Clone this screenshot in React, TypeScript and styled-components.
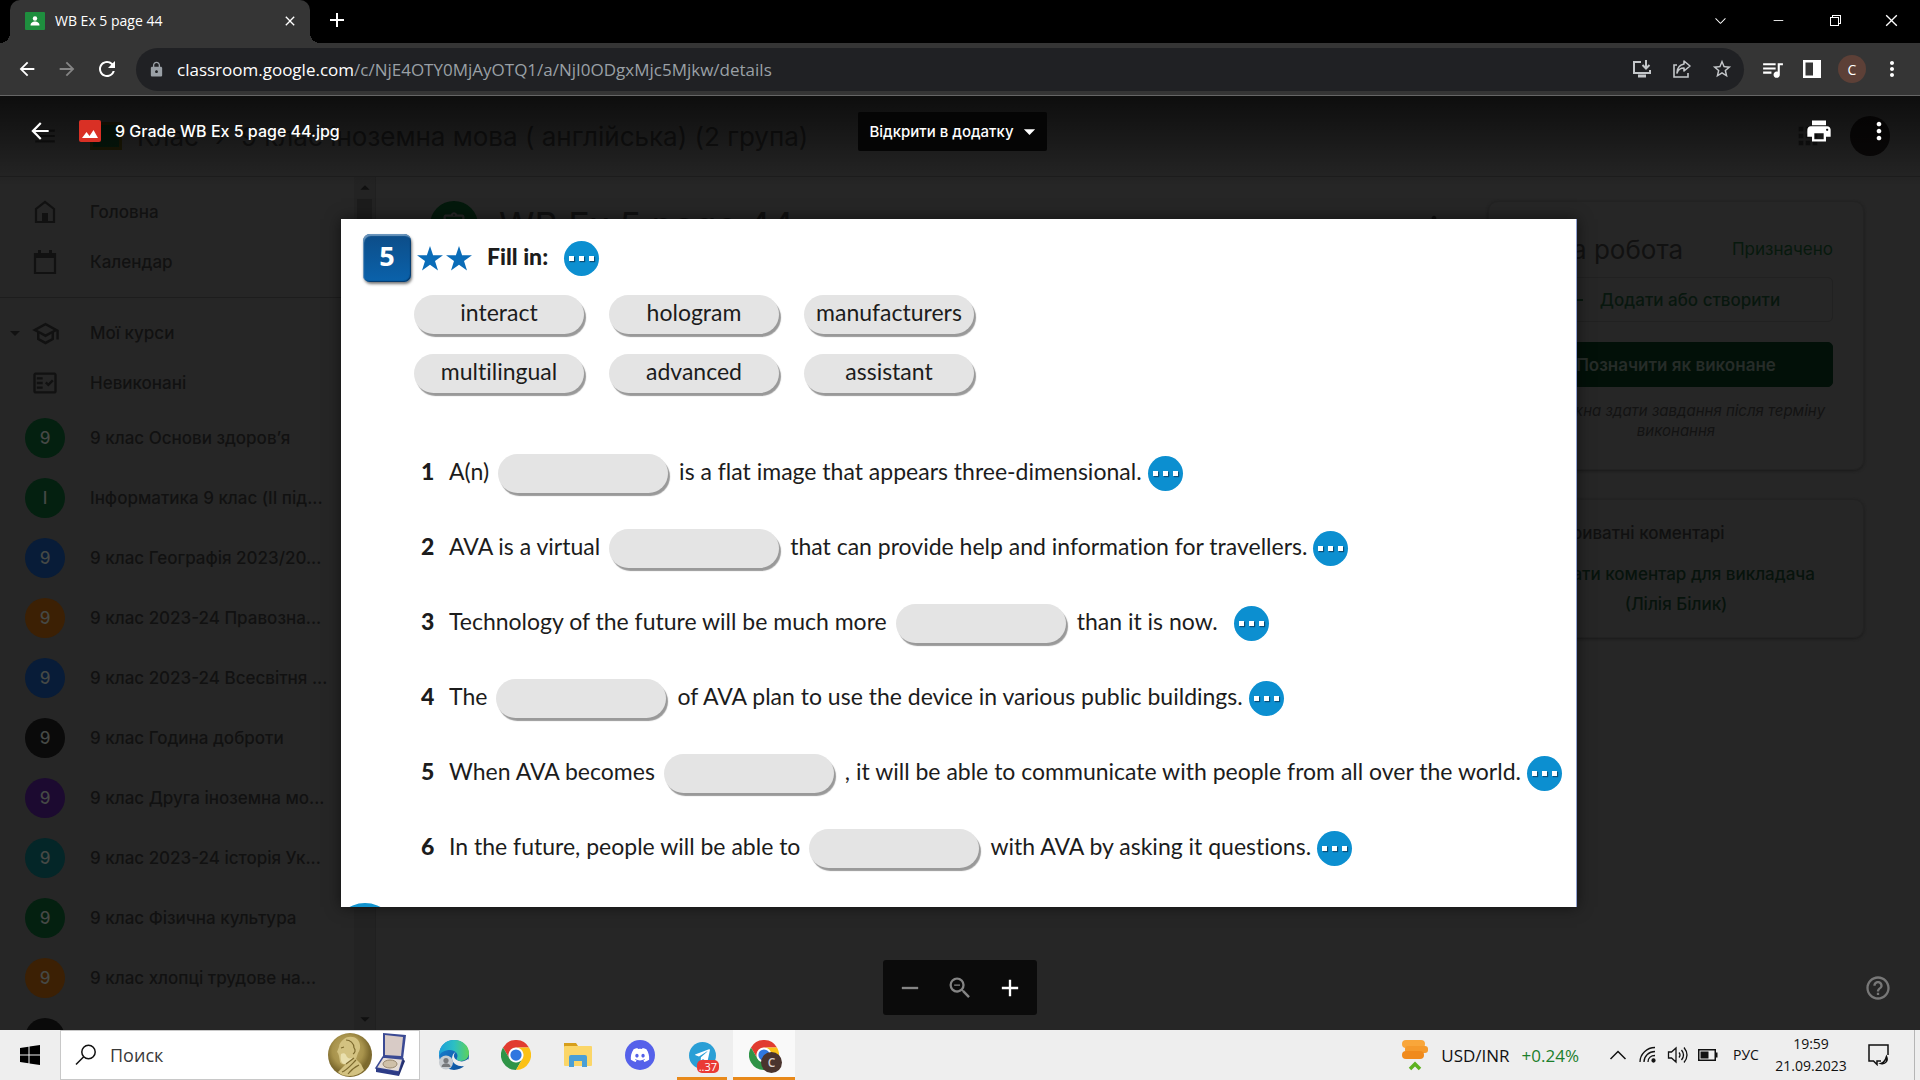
import React from 'react';
import styled, { createGlobalStyle, css } from 'styled-components';
import {
  MdArrowBack, MdArrowForward, MdRefresh, MdLock, MdStarBorder, MdQueueMusic, MdMoreVert, MdAdd, MdRemove,
  MdClose, MdPrint, MdArrowDropDown, MdArrowDropUp, MdZoomOut, MdHelpOutline, MdOutlineSchool, MdOutlineFactCheck,
  MdMenu, MdApps, MdOutlineAssignment, MdPersonOutline,
} from 'react-icons/md';
import { VscChevronDown, VscChromeMinimize, VscChromeRestore, VscChromeClose } from 'react-icons/vsc';
import { FaDiscord, FaTelegramPlane } from 'react-icons/fa';

const ui = '"Open Sans", "Noto Sans", sans-serif';
const google = 'Inter, Roboto, sans-serif';
const book = 'Lato, "Open Sans", sans-serif';

const GlobalStyle = createGlobalStyle`
  * { box-sizing: border-box; }
  body { margin: 0; background: #262626; overflow: hidden; }
  button, input { font: inherit; color: inherit; margin: 0; padding: 0; border: 0; background: none; }
  button { cursor: pointer; }
  ul, ol { list-style: none; margin: 0; padding: 0; }
  h1, h2, p { margin: 0; font-weight: 400; }
  a { color: inherit; text-decoration: none; }
  svg { display: block; flex: none; }
`;

const Desktop = styled.div`
  display: flex;
  flex-direction: column;
  height: 100vh;
  font-family: ${ui};
`;

/* ---------- browser frame ---------- */

const TabStrip = styled.header`
  display: flex;
  height: 43px;
  padding-left: 10px;
  background: #000;
  color: #fff;
`;

const Tab = styled.div`
  position: relative;
  display: flex;
  align-items: center;
  width: 300px;
  padding: 0 12px 2px 15px;
  gap: 10px;
  border-radius: 10px 10px 0 0;
  background: #353535;
  font-size: 14px;

  &::before, &::after {
    content: '';
    position: absolute;
    bottom: 0;
    width: 10px;
    height: 10px;
  }
  &::before { left: -10px; background: radial-gradient(circle at 0 0, #000 10px, #353535 10px); }
  &::after { right: -10px; background: radial-gradient(circle at 100% 0, #000 10px, #353535 10px); }
`;

const TabTitle = styled.span`
  flex: 1;
`;

const PlainButton = styled.button<{ $w?: number; $dim?: boolean }>`
  display: flex;
  align-items: center;
  justify-content: center;
  width: ${p => p.$w ?? 40}px;
  height: 40px;
  color: ${p => (p.$dim ? '#858585' : '#fff')};
`;

const TabClose = styled.button`
  display: flex;
`;

const NewTab = styled(PlainButton)`
  margin-left: 7px;
`;

const WindowButtons = styled.div`
  display: flex;
  margin-left: auto;
`;

const Toolbar = styled.nav`
  display: flex;
  align-items: center;
  height: 53px;
  padding: 0 8px 0 7px;
  border-bottom: 1px solid #666;
  background: #353535;
  color: #fff;
`;

const Omnibox = styled.div`
  display: flex;
  align-items: center;
  flex: 1;
  height: 43px;
  margin: 0 8px 0 9px;
  padding: 0 2px 0 12px;
  border-radius: 22px;
  background: #202124;
  font-size: 17px;
  color: #9aa0a6;
`;

const Address = styled.div`
  flex: 1;
  margin-left: 12px;
  outline: 0;
  white-space: nowrap;
  overflow: hidden;
`;

const Domain = styled.span`
  color: #fff;
`;

const Avatar = styled.span`
  display: grid;
  place-items: center;
  width: 28px;
  height: 28px;
  border-radius: 50%;
  background: #5d4037;
  font-size: 14px;
`;

/* ---------- dimmed classroom page ---------- */

const Viewport = styled.div`
  position: relative;
  display: flex;
  flex-direction: column;
  flex: 1;
  min-height: 0;
  background: #262626;
  color: #101010;
  font-family: ${google};
`;

const PageHeader = styled.div`
  display: flex;
  align-items: center;
  height: 81px;
  padding: 0 30px 0 32px;
  border-bottom: 1px solid #1e1e1e;
  font-size: 26px;
  color: #121212;
`;

const LogoMark = styled.span`
  width: 32px;
  height: 28px;
  margin: 0 15px 0 32px;
  border: 3px solid #1d1a05;
  background: #061a0d;
`;

const Crumb = styled.a`
  margin-right: 16px;
`;

const AppsMark = styled.span`
  margin-left: auto;
  margin-right: 28px;
`;

const Account = styled.span`
  width: 40px;
  height: 40px;
  border-radius: 50%;
  background: #0a0808;
`;

const PageBody = styled.div`
  display: flex;
  flex: 1;
  min-height: 0;
`;

const Sidebar = styled.aside`
  display: flex;
  width: 376px;
  border-right: 1px solid #202020;
`;

const SideList = styled.ul`
  flex: 1;
  padding-top: 10px;
  overflow: hidden;
  font-size: 17px;
  font-weight: 500;
  color: #111;
`;

const SideItem = styled.li<{ $tall?: boolean }>`
  display: flex;
  align-items: center;
  height: ${p => (p.$tall ? 60 : 50)}px;
  padding-left: 5px;
`;

const SideMark = styled.span`
  display: flex;
  justify-content: center;
  width: 20px;
`;

const SideIcon = styled.span`
  display: flex;
  justify-content: center;
  width: 40px;
  margin-right: 25px;
`;

const SideRule = styled.li`
  height: 21px;
  padding-top: 10px;
  &::after { content: ''; display: block; border-top: 1px solid #1d1d1d; }
`;

const Course = styled.span<{ $tone: string }>`
  display: grid;
  place-items: center;
  width: 40px;
  height: 40px;
  background: ${p => p.$tone};
  border-radius: 50%;
  color: #454845;
`;

const Scrollbar = styled.div`
  display: flex;
  flex-direction: column;
  align-items: center;
  justify-content: space-between;
  width: 21px;
  background: #232323;
`;

const Thumb = styled.span`
  width: 15px;
  height: 220px;
  margin-bottom: auto;
  background: #1c1c1c;
`;

const PageMain = styled.main`
  display: flex;
  flex: 1;
  align-items: flex-start;
  padding: 24px 56px 0 54px;
`;

const TaskHead = styled.div`
  display: flex;
  align-items: center;
  flex: 1;
  gap: 21px;
  padding-right: 40px;
`;

const TaskBadge = styled.span`
  display: grid;
  place-items: center;
  width: 48px;
  height: 48px;
  border-radius: 50%;
  background: #04190c;
  color: #262626;
`;

const TaskTitle = styled.h1`
  flex: 1;
  font-size: 36px;
  line-height: 48px;
`;

const Cards = styled.div`
  display: grid;
  gap: 29px;
  width: 376px;
`;

const Card = styled.section<{ $tail: number }>`
  padding: 15px 30px ${p => p.$tail}px;
  border: 1px solid #222;
  border-radius: 10px;
  box-shadow: 0 1px 3px #1a1a1a;
`;

const CardHead = styled.div`
  display: flex;
  align-items: center;
  justify-content: space-between;
  height: 60px;
  padding-top: 4px;
`;

const CardTitle = styled.h2`
  font-size: 26px;
  color: #111;
`;

const Status = styled.span`
  font-size: 17px;
  color: #07190d;
`;

const CardButton = styled.button<{ $filled?: boolean }>`
  display: flex;
  align-items: center;
  justify-content: center;
  gap: 12px;
  width: 100%;
  height: 45px;
  margin-bottom: 20px;
  padding-right: 8px;
  border: 1px solid #212121;
  border-radius: 5px;
  font-size: 17px;
  font-weight: 500;
  color: #08170e;
  white-space: nowrap;
  ${p => p.$filled && css`
    margin-bottom: 14px;
    padding-right: 0;
    border-color: #021008;
    background: #021008;
    font-weight: 600;
    color: #262c28;
  `}
`;

const Note = styled.p`
  font-size: 15px;
  line-height: 20px;
  font-style: italic;
  text-align: center;
  color: #131313;
`;

const CommentHead = styled.h2`
  display: flex;
  align-items: center;
  gap: 14px;
  height: 36px;
  font-size: 17px;
  font-weight: 500;
`;

const CommentLink = styled.a`
  display: block;
  margin-top: 8px;
  font-size: 17px;
  font-weight: 500;
  line-height: 30px;
  text-align: center;
  color: #07130c;
`;

/* ---------- file viewer ---------- */

const Viewer = styled.div`
  position: absolute;
  inset: 0;
  display: flex;
  flex-direction: column;
  background: linear-gradient(rgba(0, 0, 0, 0.65), rgba(0, 0, 0, 0) 90px);
  color: #fff;
`;

const ViewerHead = styled.div`
  display: grid;
  grid-template-columns: 1fr auto 1fr;
  align-items: center;
  height: 70px;
  padding: 0 27px 0 12px;
`;

const FileInfo = styled.div`
  display: flex;
  align-items: center;
  padding-left: 15px;
  font-size: 16px;
  font-weight: 500;
`;

const IconButton = styled.button`
  display: flex;
`;

const FileMark = styled.span`
  display: flex;
  margin: 0 14px 0 26px;
`;

const OpenButton = styled.button`
  display: flex;
  align-items: center;
  height: 39px;
  padding: 0 4px 0 11px;
  gap: 2px;
  border-radius: 2px;
  background: #050505;
  font-size: 15px;
  font-weight: 500;
`;

const ViewerActions = styled.div`
  display: flex;
  justify-content: flex-end;
  gap: 32px;
`;

const Stage = styled.div`
  display: flex;
  flex: 1;
  align-items: center;
  justify-content: center;
  min-height: 0;
  padding-right: 2px;
`;

const ViewerFoot = styled.div`
  display: grid;
  grid-template-columns: 1fr auto 1fr;
  align-items: center;
  padding: 0 28px 15px;
`;

const ZoomBar = styled.div`
  display: flex;
  grid-column: 2;
  align-items: center;
  height: 55px;
  padding: 0 2px;
  border-radius: 3px;
  background: #0b0b0b;
`;

const HelpButton = styled(IconButton)`
  justify-self: end;
  color: #777;
`;

/* ---------- worksheet ---------- */

const Sheet = styled.article`
  width: 1236px;
  max-width: 100%;
  padding-top: 15px;
  border-right: 1px solid #8f9fd0;
  background: #fff;
  box-shadow: 0 0 14px rgba(0, 0, 0, 0.55);
  color: #1c1c1c;
  font-family: ${book};
  font-size: 23px;
  font-variant-ligatures: none;
  overflow: hidden;
`;

const Task = styled.div`
  display: flex;
  align-items: center;
  padding-left: 22px;
  height: 48px;
`;

const TaskNumber = styled.span`
  width: 48px;
  height: 48px;
  margin-right: 6px;
  border-radius: 7px;
  background: linear-gradient(#0d4d88, #0a62ab);
  box-shadow: inset 1px 2px 1px #6b96bd, inset -1px -1px 1px #063a6b, 1px 2px 3px #777;
  color: #fff;
  font-family: "Open Sans", sans-serif;
  font-size: 27px;
  font-weight: 700;
  line-height: 44px;
  text-align: center;
`;

const TaskText = styled.h1`
  margin: 0 10px 0 15px;
  font-size: 23px;
  font-weight: 900;
  line-height: 44px;
  height: 48px;
`;

const Stars = styled.span`
  display: flex;
  gap: 3px;
`;

const Dots = styled.button<{ $far?: boolean }>`
  display: flex;
  align-items: center;
  justify-content: center;
  align-self: center;
  gap: 5px;
  width: 35px;
  height: 35px;
  flex: none;
  margin-left: ${p => (p.$far ? 16 : 6)}px;
  border-radius: 50%;
  background: #0c8fd0;

  i {
    width: 5px;
    height: 5px;
    background: #fff;
    box-shadow: 1px 1px 1px #0b4f78;
  }
`;

const pill = css`
  width: 170px;
  height: 39px;
  flex: none;
  border-radius: 20px;
  background: #e4e4e4;
  box-shadow: 2px 3px 1px #999;
  text-align: center;
`;

const WordBank = styled.div`
  display: grid;
  grid-template-columns: repeat(3, 170px);
  gap: 20px 25px;
  margin: 13px 0 61px 73px;
`;

const Word = styled.button`
  && {
    ${pill}
    padding-bottom: 5px;
    line-height: 34px;
    white-space: nowrap;
  }
`;

const Questions = styled.ol`
  display: grid;
  gap: 36px;
  padding-left: 80px;
`;

const Question = styled.li`
  display: flex;
  align-items: flex-start;
  line-height: 34px;
  white-space: nowrap;
`;

const Num = styled.b`
  width: 28px;
  font-weight: 900;
`;

const Blank = styled.input`
  && {
    ${pill}
    margin: 0 11px 0 9px;
  }
`;

const NextTask = styled.div`
  height: 4px;
  margin: 35px 0 0 -8px;
  overflow: hidden;
  &::before {
    content: '';
    display: block;
    width: 64px;
    height: 64px;
    border-radius: 50%;
    background: #1294cf;
  }
`;

/* ---------- taskbar ---------- */

const Taskbar = styled.footer`
  display: flex;
  height: 50px;
  background: #eee;
  color: #111;
`;

const StartButton = styled.button`
  display: grid;
  place-items: center;
  width: 60px;
`;

const SearchBox = styled.label`
  display: flex;
  align-items: center;
  width: 360px;
  margin-right: 3px;
  padding: 0 11px 0 14px;
  border: 1px solid #c8c8c8;
  background: #fff;
`;

const SearchInput = styled.input`
  && {
    flex: 1;
    min-width: 0;
    padding-left: 13px;
    font-size: 18px;
    outline: 0;
  }
  &::placeholder { color: #3a3a3a; opacity: 1; }
`;

const AppButton = styled.button<{ $open?: boolean; $active?: boolean }>`
  position: relative;
  display: grid;
  place-items: center;
  width: 62px;
  ${p => p.$active && css`&& { background: #f9f9f9; }`}
  ${p => (p.$open || p.$active) && css`
    &::after {
      content: '';
      position: absolute;
      bottom: 0;
      left: ${p.$active ? 0 : 6}px;
      right: ${p.$active ? 0 : 6}px;
      height: 3px;
      background: #e8891a;
    }
  `}
`;

const Disc = styled.span<{ $tone: string; $size: number }>`
  display: grid;
  place-items: center;
  width: ${p => p.$size}px;
  height: ${p => p.$size}px;
  border-radius: 50%;
  background: ${p => p.$tone};
  color: #fff;
`;

const UnreadBadge = styled.span`
  position: absolute;
  right: 14px;
  bottom: 7px;
  padding: 0 2px;
  border-radius: 5px;
  background: #ea3a35;
  color: #fff;
  font-size: 11px;
  line-height: 13px;
`;

const ProfileBadge = styled.span`
  position: absolute;
  right: 13px;
  bottom: 7px;
  display: grid;
  place-items: center;
  width: 21px;
  height: 21px;
  border-radius: 50%;
  background: #4a342e;
  color: #d8cfcc;
  font-size: 12px;
  font-weight: 600;
`;

const News = styled.button`
  display: flex;
  align-items: center;
  gap: 12px;
  margin-left: auto;
  margin-right: 24px;
  font-size: 17px;
`;

const Change = styled.span`
  color: #1b7f2c;
`;

const TrayButton = styled.button<{ $w: number }>`
  display: grid;
  place-items: center;
  align-content: center;
  width: ${p => p.$w}px;
  font-size: 14px;
  line-height: 22px;
`;

const PeekDesktop = styled.button`
  width: 6px;
  margin-left: 9px;
  && { border-left: 1px solid #b5b5b5; }
`;

/* ---------- drawings ---------- */

const ClassroomIcon = () => (
  <svg width="20" height="18" viewBox="0 0 20 18">
    <rect width="20" height="18" rx="1" fill="#1e8e3e" />
    <circle cx="10" cy="6.5" r="2.2" fill="#fff" />
    <path d="M5.5 13.500c0-3 2.500-4 4.500-4s4.500 1 4.500 4z" fill="#fff" />
  </svg>
);

const InstallIcon = () => (
  <svg width="20" height="20" viewBox="0 0 20 20" fill="none" stroke="#c4c7ca" strokeWidth="2">
    <path d="M9 3H2v11h16v-3M14 1v8M10.500 6l3.500 3.500L17.500 6" />
    <path d="M6 17h8" strokeWidth="3" />
  </svg>
);

const ShareIcon = () => (
  <svg width="20" height="20" viewBox="0 0 20 20" fill="none" stroke="#c4c7ca" strokeWidth="1.600">
    <path d="M5 6H2v12h14v-4" />
    <path d="M12 2l6 5-6 5V9c-4 0-6 2-7 5 0-5 2-8 7-9z" strokeLinejoin="round" />
  </svg>
);

const PanelIcon = () => (
  <svg width="18" height="18" viewBox="0 0 18 18">
    <rect x="1.250" y="1.250" width="15.500" height="15.500" fill="none" stroke="#fff" strokeWidth="2.500" />
    <rect x="10" y="1" width="7" height="16" fill="#fff" />
  </svg>
);

const HouseIcon = () => (
  <svg width="24" height="24" viewBox="0 0 24 24">
    <path d="M3 22V9l9-7 9 7v13z" fill="none" stroke="#111" strokeWidth="2.200" />
    <rect x="9" y="13" width="6" height="8" fill="#111" />
  </svg>
);

const CalendarIcon = () => (
  <svg width="24" height="26" viewBox="0 0 24 26">
    <path d="M2 5h20v19H2z" fill="none" stroke="#111" strokeWidth="2.200" />
    <path d="M2 4h20v5H2zM5 1h3v4H5zM16 1h3v4h-3z" fill="#111" />
  </svg>
);

const PictureIcon = () => (
  <svg width="22" height="22" viewBox="0 0 22 22">
    <rect width="22" height="22" rx="2" fill="#d93025" />
    <path d="M3 18l4.500-6 3 4L14.500 10 19 18z" fill="#fff" />
  </svg>
);

const Star = () => (
  <svg width="26" height="25" viewBox="0 0 26 25">
    <path d="M13 0l3.100 9.200H26l-8 5.800 3 9.500-8-5.800-8 5.800 3-9.500-8-5.800h9.900z" fill="#0a6cb8" />
  </svg>
);

const WindowsIcon = () => (
  <svg width="20" height="20" viewBox="0 0 20 20">
    <path d="M0 3l8.500-1.200v7.800H0zM9.500 1.600L20 0v9.600H9.500zM0 10.500h8.500v7.800L0 17zM9.500 10.500H20V20L9.500 18.500z" fill="#000" />
  </svg>
);

const SearchIcon = () => (
  <svg width="22" height="22" viewBox="0 0 22 22" fill="none" stroke="#111" strokeWidth="1.500">
    <circle cx="13.500" cy="8" r="6.700" />
    <path d="M8.700 12.800L1 20.500" />
  </svg>
);

const MedalArt = () => (
  <svg width="80" height="46" viewBox="0 0 80 46">
    <defs>
      <radialGradient id="gold" cx="45%" cy="40%">
        <stop offset="0" stopColor="#bfac68" />
        <stop offset="0.700" stopColor="#a8934c" />
        <stop offset="1" stopColor="#7d6a2e" />
      </radialGradient>
    </defs>
    <circle cx="22" cy="23" r="22" fill="url(#gold)" />
    <path d="M16 7c3-3 10-3 13 0 4 4 4 10 1 14l-2 6 5 5 3 6c-4 4-9 6-15 6-4 0-8-1-11-4l8-8c-2 1-5 0-6-2l-1-6-1-3-1-1 2-5c0-3 2-6 5-8z" fill="#d3c281" />
    <path d="M13 22c2-1 4-1 5 1 1 3 3 4 6 3-1 4-4 6-8 6-3-1-4-5-3-10z" fill="#efe6b8" opacity=".8" />
    <path d="M18 8c4 0 8 3 8 8M26 16c2 2 1 5-1 6M13 16l3-1M18 32l8-6M14 40c5-2 9-7 14-12M20 42c3-4 7-7 11-9" fill="none" stroke="#7d6a2e" strokeWidth="1.200" />
    <path d="M55 1l23 2-3 24-20-2z" fill="#3b4a94" />
    <path d="M57 3l18 2-2 19-16-1z" fill="#d8cbc6" />
    <path d="M55 25l20 2-4 13-23-4z" fill="#e5dcd6" stroke="#3b4a94" strokeWidth="1.500" />
    <path d="M48 36l23 4v4l-23-4z" fill="#2c3b86" />
    <path d="M75 27l-4 13v4l6-15z" fill="#24306e" />
    <ellipse cx="62" cy="32" rx="7" ry="4" fill="#cfc0a8" stroke="#9a8a70" />
  </svg>
);

const EdgeIcon = () => (
  <svg width="30" height="30" viewBox="0 0 30 30">
    <defs>
      <linearGradient id="edgeTop" x1="0" x2="1">
        <stop offset="0" stopColor="#1d9fd9" />
        <stop offset="0.500" stopColor="#2cbfc4" />
        <stop offset="1" stopColor="#5fd25a" />
      </linearGradient>
      <linearGradient id="edgeLow" x1="0" x2="1" y1="0" y2="1">
        <stop offset="0" stopColor="#1b86d8" />
        <stop offset="1" stopColor="#0c4a94" />
      </linearGradient>
    </defs>
    <circle cx="15" cy="15" r="15" fill="url(#edgeLow)" />
    <path d="M17 12c-3 2-3 6 1 8 3 2 7 2 11-1l1 3-2 3c-6 3-14 0-15-6 0-3 1-6 4-7z" fill="#eeeeee" />
    <path d="M0 14C1 5 7 0 15 0c9 0 15 6 15 13 0 5-4 8-8 8-3 0-5-1-4-3 2-4-2-8-7-8-5 0-10 2-11 7z" fill="url(#edgeTop)" />
    <circle cx="7" cy="22.500" r="7" fill="#c8ccd0" />
    <circle cx="7" cy="20.500" r="2.600" fill="#77797c" />
    <path d="M2.500 27c0-5 9-5 9 0z" fill="#77797c" />
  </svg>
);

const ChromeIcon = () => (
  <svg width="30" height="30" viewBox="0 0 48 48">
    <path d="M24 12h20.800A24 24 0 0 0 3.200 12l10.400 18A12 12 0 0 1 24 12z" fill="#e13c30" />
    <path d="M13.600 30L3.200 12A24 24 0 0 0 24 48l10.400-18a12 12 0 0 1-20.800 0z" fill="#2f9447" />
    <path d="M34.400 30L24 48a24 24 0 0 0 20.800-36H24a12 12 0 0 1 10.400 18z" fill="#fbc116" />
    <circle cx="24" cy="24" r="11.500" fill="#fff" />
    <circle cx="24" cy="24" r="9" fill="#2f77e0" />
  </svg>
);

const FolderIcon = () => (
  <svg width="28" height="24" viewBox="0 0 28 24">
    <path d="M0 0h12l2 3v4H0z" fill="#d79f1c" />
    <rect y="3" width="28" height="20" rx="1" fill="#fbd668" />
    <path d="M5 24V14q0-2 2-2h14q2 0 2 2v10h-5v-6h-8v6z" fill="#4a9fd6" />
  </svg>
);

const CoinsIcon = () => (
  <svg width="28" height="32" viewBox="0 0 28 32">
    <rect x="1" y="1" width="23" height="8" rx="4" fill="#f9a63a" />
    <rect x="4" y="7" width="23" height="7" rx="3" fill="#f59a2c" />
    <rect x="1" y="12" width="22" height="8" rx="4" fill="#f08a1c" />
    <path d="M9 30l5-5 5 5" fill="none" stroke="#5cb21f" strokeWidth="3.500" />
  </svg>
);

const ChevronUpIcon = () => (
  <svg width="18" height="12" viewBox="0 0 18 12" fill="none" stroke="#111" strokeWidth="1.500"><path d="M1.500 10L9 2.500l7.500 7.500" /></svg>
);

const WifiIcon = () => (
  <svg width="18" height="18" viewBox="0 0 18 18" fill="none" stroke="#111" strokeWidth="1.300">
    <path d="M1 16C1 8 8 1.500 16 1.500M5 16c0-6 5-10.500 11-10.500M9 16c0-4 3-6.500 7-6.500" />
    <circle cx="14.500" cy="14.500" r="1.500" fill="#111" />
  </svg>
);

const SoundIcon = () => (
  <svg width="22" height="18" viewBox="0 0 22 18" fill="none" stroke="#111" strokeWidth="1.300">
    <path d="M1.500 6v6h3L9 16V2L4.500 6zM12 6.500q2 2.500 0 5M14.500 4q4 5 0 10M17 1.500q6 7.500 0 15" />
  </svg>
);

const BatteryIcon = () => (
  <svg width="20" height="12" viewBox="0 0 20 12">
    <rect x=".750" y=".750" width="16.500" height="10.500" fill="none" stroke="#111" strokeWidth="1.500" />
    <path d="M2.500 2.500h8v7h-8zM18 3.500h1.500v5H18z" fill="#111" />
  </svg>
);

const NotesIcon = () => (
  <svg width="22" height="22" viewBox="0 0 22 22" fill="none" stroke="#111" strokeWidth="1.500">
    <path d="M13 17H9v3.500L5.500 17H1V1h19v10" />
    <path d="M18.500 12.500c2 4-1 8-5.500 7 3-1 4.500-3.500 5.500-7z" />
  </svg>
);

/* ---------- data ---------- */

const tones = {
  green: '#042010', blue: '#081c38', orange: '#3c2004', black: '#0a0a0a', purple: '#1c0a30', teal: '#042628',
};

const courses: { name: string; tone: keyof typeof tones }[] = [
  { name: '9 клас Основи здоров’я', tone: 'green' },
  { name: 'Інформатика 9 клас (II під...', tone: 'green' },
  { name: '9 клас Географія 2023/20...', tone: 'blue' },
  { name: '9 клас 2023-24 Правозна...', tone: 'orange' },
  { name: '9 клас 2023-24 Всесвітня ...', tone: 'blue' },
  { name: '9 клас Година доброти', tone: 'black' },
  { name: '9 клас Друга іноземна мо...', tone: 'purple' },
  { name: '9 клас 2023-24 історія Ук...', tone: 'teal' },
  { name: '9 клас Фізична культура', tone: 'green' },
  { name: '9 клас хлопці трудове на...', tone: 'orange' },
  { name: '', tone: 'black' },
];

const words = ['interact', 'hologram', 'manufacturers', 'multilingual', 'advanced', 'assistant'];

const questions = [
  { before: 'A(n)', after: 'is a flat image that appears three-dimensional.' },
  { before: 'AVA is a virtual', after: 'that can provide help and information for travellers.' },
  { before: 'Technology of the future will be much more', after: 'than it is now.', far: true },
  { before: 'The', after: 'of AVA plan to use the device in various public buildings.' },
  { before: 'When AVA becomes', after: ', it will be able to communicate with people from all over the world.' },
  { before: 'In the future, people will be able to', after: 'with AVA by asking it questions.' },
];

const MoreDots = ({ far, label }: { far?: boolean; label: string }) => (
  <Dots $far={far} aria-label={label}><i /><i /><i /></Dots>
);

/* ---------- sections ---------- */

const BrowserFrame = () => (
  <>
    <TabStrip>
      <Tab>
        <ClassroomIcon />
        <TabTitle>WB Ex 5 page 44</TabTitle>
        <TabClose aria-label="Close tab"><MdClose size={16} /></TabClose>
      </Tab>
      <NewTab aria-label="New tab"><MdAdd size={24} /></NewTab>
      <WindowButtons>
        <PlainButton $w={57} aria-label="Search tabs"><VscChevronDown size={17} /></PlainButton>
        <PlainButton $w={57} aria-label="Minimize"><VscChromeMinimize size={14} /></PlainButton>
        <PlainButton $w={57} aria-label="Restore"><VscChromeRestore size={16} /></PlainButton>
        <PlainButton $w={57} aria-label="Close"><VscChromeClose size={17} /></PlainButton>
      </WindowButtons>
    </TabStrip>
    <Toolbar>
      <PlainButton aria-label="Back"><MdArrowBack size={22} /></PlainButton>
      <PlainButton $dim aria-label="Forward"><MdArrowForward size={22} /></PlainButton>
      <PlainButton aria-label="Reload"><MdRefresh size={24} /></PlainButton>
      <Omnibox>
        <MdLock size={17} />
        <Address role="textbox" aria-label="Address" contentEditable suppressContentEditableWarning spellCheck={false}>
          <Domain>classroom.google.com</Domain>/c/NjE4OTY0MjAyOTQ1/a/NjI0ODgxMjc5Mjkw/details
        </Address>
        <PlainButton aria-label="Install"><InstallIcon /></PlainButton>
        <PlainButton aria-label="Share"><ShareIcon /></PlainButton>
        <PlainButton aria-label="Bookmark"><MdStarBorder size={22} color="#c4c7ca" /></PlainButton>
      </Omnibox>
      <PlainButton aria-label="Media"><MdQueueMusic size={25} /></PlainButton>
      <PlainButton aria-label="Side panel"><PanelIcon /></PlainButton>
      <PlainButton aria-label="Profile"><Avatar>C</Avatar></PlainButton>
      <PlainButton aria-label="Menu"><MdMoreVert size={24} /></PlainButton>
    </Toolbar>
  </>
);

const ClassroomPage = () => (
  <>
    <PageHeader>
      <MdMenu size={26} />
      <LogoMark />
      <Crumb href="#">Клас</Crumb>
      <Crumb as="span">›</Crumb>
      <Crumb href="#">9 клас іноземна мова ( англійська) (2 група)</Crumb>
      <AppsMark><MdApps size={28} /></AppsMark>
      <Account />
    </PageHeader>
    <PageBody>
      <Sidebar>
        <SideList>
          <SideItem><SideMark /><SideIcon><HouseIcon /></SideIcon><a href="#">Головна</a></SideItem>
          <SideItem><SideMark /><SideIcon><CalendarIcon /></SideIcon><a href="#">Календар</a></SideItem>
          <SideRule />
          <SideItem>
            <SideMark><MdArrowDropDown size={24} /></SideMark>
            <SideIcon><MdOutlineSchool size={29} /></SideIcon><a href="#">Мої курси</a>
          </SideItem>
          <SideItem><SideMark /><SideIcon><MdOutlineFactCheck size={28} /></SideIcon><a href="#">Невиконані</a></SideItem>
          {courses.map(c => (
            <SideItem $tall key={c.name}>
              <SideMark />
              <SideIcon><Course $tone={tones[c.tone]}>{c.name.charAt(0)}</Course></SideIcon>
              <a href="#">{c.name}</a>
            </SideItem>
          ))}
        </SideList>
        <Scrollbar>
          <MdArrowDropUp size={22} />
          <Thumb />
          <MdArrowDropDown size={22} />
        </Scrollbar>
      </Sidebar>
      <PageMain>
        <TaskHead>
          <TaskBadge><MdOutlineAssignment size={28} /></TaskBadge>
          <TaskTitle>WB Ex 5 page 44</TaskTitle>
          <MdMoreVert size={28} />
        </TaskHead>
        <Cards>
          <Card $tail={28}>
            <CardHead><CardTitle>Ваша робота</CardTitle><Status>Призначено</Status></CardHead>
            <CardButton><MdAdd size={24} />Додати або створити</CardButton>
            <CardButton $filled>Позначити як виконане</CardButton>
            <Note>Не можна здати завдання після терміну виконання</Note>
          </Card>
          <Card $tail={18}>
            <CommentHead><MdPersonOutline size={26} />Приватні коментарі</CommentHead>
            <CommentLink href="#">Додати коментар для викладача (Лілія Білик)</CommentLink>
          </Card>
        </Cards>
      </PageMain>
    </PageBody>
  </>
);

const Worksheet = () => (
  <Sheet>
    <Task>
      <TaskNumber>5</TaskNumber>
      <Stars><Star /><Star /></Stars>
      <TaskText>Fill in:</TaskText>
      <MoreDots label="Task options" />
    </Task>
    <WordBank>
      {words.map(w => <Word key={w}>{w}</Word>)}
    </WordBank>
    <Questions>
      {questions.map((q, i) => (
        <Question key={q.before}>
          <Num>{i + 1}</Num>
          <span>{q.before}</span>
          <Blank aria-label={`Answer ${i + 1}`} />
          <span>{q.after}</span>
          <MoreDots far={q.far} label={`Options for question ${i + 1}`} />
        </Question>
      ))}
    </Questions>
    <NextTask />
  </Sheet>
);

const FileViewer = () => (
  <Viewer>
    <ViewerHead>
      <FileInfo>
        <IconButton aria-label="Back"><MdArrowBack size={26} /></IconButton>
        <FileMark><PictureIcon /></FileMark>
        9 Grade WB Ex 5 page 44.jpg
      </FileInfo>
      <OpenButton>Відкрити в додатку<MdArrowDropDown size={27} /></OpenButton>
      <ViewerActions>
        <IconButton aria-label="Print"><MdPrint size={28} /></IconButton>
        <IconButton aria-label="More"><MdMoreVert size={28} /></IconButton>
      </ViewerActions>
    </ViewerHead>
    <Stage><Worksheet /></Stage>
    <ViewerFoot>
      <ZoomBar>
        <PlainButton $w={50} $dim aria-label="Zoom out"><MdRemove size={28} /></PlainButton>
        <PlainButton $w={50} $dim aria-label="Reset zoom"><MdZoomOut size={28} /></PlainButton>
        <PlainButton $w={50} aria-label="Zoom in"><MdAdd size={28} /></PlainButton>
      </ZoomBar>
      <HelpButton aria-label="Help"><MdHelpOutline size={28} /></HelpButton>
    </ViewerFoot>
  </Viewer>
);

const SystemTaskbar = () => (
  <Taskbar>
    <StartButton aria-label="Start"><WindowsIcon /></StartButton>
    <SearchBox>
      <SearchIcon />
      <SearchInput placeholder="Поиск" aria-label="Поиск" />
      <MedalArt />
    </SearchBox>
    <AppButton aria-label="Edge"><EdgeIcon /></AppButton>
    <AppButton aria-label="Chrome"><ChromeIcon /></AppButton>
    <AppButton aria-label="Files"><FolderIcon /></AppButton>
    <AppButton aria-label="Discord"><Disc $tone="#5561ea" $size={30}><FaDiscord size={20} /></Disc></AppButton>
    <AppButton $open aria-label="Telegram">
      <Disc $tone="#2a9fd6" $size={27}><FaTelegramPlane size={17} /></Disc>
      <UnreadBadge>..37</UnreadBadge>
    </AppButton>
    <AppButton $active aria-label="Chrome, profile C">
      <ChromeIcon />
      <ProfileBadge>C</ProfileBadge>
    </AppButton>
    <News>
      <CoinsIcon />
      <span>USD/INR</span>
      <Change>+0.24%</Change>
    </News>
    <TrayButton $w={30} aria-label="Hidden icons"><ChevronUpIcon /></TrayButton>
    <TrayButton $w={30} aria-label="Network"><WifiIcon /></TrayButton>
    <TrayButton $w={30} aria-label="Volume"><SoundIcon /></TrayButton>
    <TrayButton $w={30} aria-label="Battery"><BatteryIcon /></TrayButton>
    <TrayButton $w={46}>РУС</TrayButton>
    <TrayButton $w={84}><span>19:59</span><span>21.09.2023</span></TrayButton>
    <TrayButton $w={52} aria-label="Notifications"><NotesIcon /></TrayButton>
    <PeekDesktop aria-label="Show desktop" />
  </Taskbar>
);

export default function App() {
  return (
    <>
      <GlobalStyle />
      <Desktop>
        <BrowserFrame />
        <Viewport>
          <ClassroomPage />
          <FileViewer />
        </Viewport>
        <SystemTaskbar />
      </Desktop>
    </>
  );
}
